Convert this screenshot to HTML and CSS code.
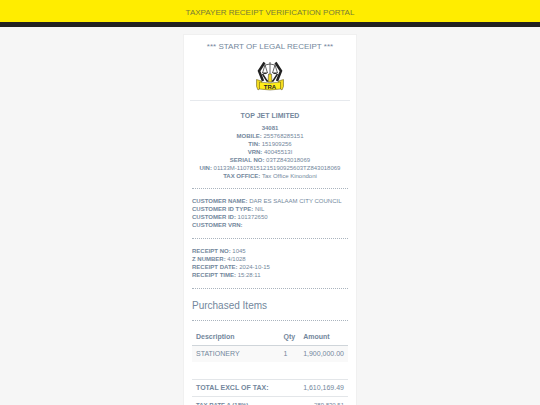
FILE: index.html
```html
<!DOCTYPE html>
<html lang="en">
<head>
  <meta charset="UTF-8" />
  <meta name="viewport" content="width=device-width,initial-scale=1.0"/>
  <title>Taxpayer Receipt Verification Portal</title>
  <link rel="stylesheet" href="styles.css">
</head>
<body>
  <header class="topbar">TAXPAYER RECEIPT VERIFICATION PORTAL</header>
  <main class="receipt">
    <div class="receipt-header">
      <p class="legal">*** START OF LEGAL RECEIPT ***</p>
      <svg class="logo" viewBox="0 0 56 60" role="img" aria-label="TRA">
        <path d="M17 3 6 20 14 40M39 3 50 20 42 40" fill="none" stroke="#222" stroke-width="5"/>
        <path d="M13 26 22 40H34L43 26" fill="none" stroke="#222" stroke-width="3"/>
        <path d="M28 2V30M18 8Q28 4 38 8M18 8 13 24M18 8 23 24M38 8 33 24M38 8 43 24" fill="none" stroke="#333" stroke-width="1.5"/>
        <path d="M12 23H24Q18 30 12 23ZM32 23H44Q38 30 32 23Z" fill="#333"/>
        <path d="M25 26H31L32 42H24Z" fill="#f4dc20" stroke="#333"/>
        <path d="M1 37 11 40V53L4 58 1 51ZM55 37 45 40V53L52 58 55 51Z" fill="#f4dc20" stroke="#554d16"/>
        <path d="M7 42Q28 46 49 42V56Q28 60 7 56Z" fill="#ffec1a" stroke="#554d16"/>
        <text class="logo-text" x="28" y="55" text-anchor="middle">TRA</text>
      </svg>
    </div>
    <section class="company">
      <h1>TOP JET LIMITED</h1>
      <p><b>34081</b></p>
      <p><b>MOBILE:</b> 255768285151</p>
      <p><b>TIN:</b> 151909256</p>
      <p><b>VRN:</b> 40045513I</p>
      <p><b>SERIAL NO:</b> 03TZ843018069</p>
      <p><b>UIN:</b> 01133M-11078151215190925603TZ843018069</p>
      <p><b>TAX OFFICE:</b> Tax Office Kinondoni</p>
    </section>
    <section class="details">
      <p><b>CUSTOMER NAME:</b> DAR ES SALAAM CITY COUNCIL</p>
      <p><b>CUSTOMER ID TYPE:</b> NIL</p>
      <p><b>CUSTOMER ID:</b> 101372650</p>
      <p><b>CUSTOMER VRN:</b></p>
    </section>
    <section class="details">
      <p><b>RECEIPT NO:</b> 1045</p>
      <p><b>Z NUMBER:</b> 4/1028</p>
      <p><b>RECEIPT DATE:</b> 2024-10-15</p>
      <p><b>RECEIPT TIME:</b> 15:28:11</p>
    </section>
    <section class="purchases">
      <h2>Purchased Items</h2>
      <table class="items">
        <thead>
          <tr><th>Description</th><th>Qty</th><th>Amount</th></tr>
        </thead>
        <tbody>
          <tr><td>STATIONERY</td><td>1</td><td>1,900,000.00</td></tr>
        </tbody>
      </table>
      <table class="totals">
        <tbody>
          <tr><th>TOTAL EXCL OF TAX:</th><td>1,610,169.49</td></tr>
          <tr class="small"><th>TAX RATE A (18%)</th><td>289,830.51</td></tr>
        </tbody>
      </table>
    </section>
  </main>
</body>
</html>
```
FILE: styles.css
```css
body {
  margin: 0;
  background: #f6f6f6;
  color: #73879c;
  font-family: "Liberation Sans", Arial, sans-serif;
  font-size: 6px;
  line-height: 8px;
}
h1, h2, p {
  margin: 0;
}
.topbar {
  padding: 8px 0 4px;
  background: #ffed00;
  border-bottom: 5px solid #222;
  color: #777c38;
  font-size: 8px;
  line-height: 10px;
  text-align: center;
}
.receipt {
  box-sizing: border-box;
  max-width: 174px;
  margin: 7px auto 0;
  padding: 7px 6px;
  background: #fff;
  border: 1px solid #f0f0f0;
}
.receipt-header {
  padding-bottom: 9px;
  border-bottom: 1px solid #e6e9ed;
  text-align: center;
}
.legal {
  font-size: 8px;
  line-height: 10px;
}
.logo {
  display: block;
  width: 28px;
  height: 30px;
  margin: 9px auto 0;
}
.logo-text {
  fill: #222;
  font-size: 12px;
  font-weight: bold;
}
.company,
.details,
.purchases {
  margin: 0 2px;
}
.company {
  padding: 10px 0 8px;
  border-bottom: 1px dotted #aab4be;
  text-align: center;
}
.company h1 {
  margin-bottom: 3px;
  font-size: 7px;
  line-height: 10px;
}
.details {
  padding: 8px 0 9px;
  border-bottom: 1px dotted #aab4be;
}
h2 {
  padding: 10px 0 8px;
  border-bottom: 1px dotted #aab4be;
  font-size: 10px;
  font-weight: normal;
  line-height: 13px;
}
table {
  width: 100%;
  border-collapse: collapse;
  font-size: 7px;
  line-height: 10px;
}
th, td {
  padding: 3px 4px;
  text-align: left;
}
.items {
  margin: 8px 0 17px;
}
.items th {
  border-bottom: 1px solid #cfd5da;
}
.items td {
  background: #f9f9f9;
}
.items th:first-child {
  width: 100%;
}
.totals tr {
  border-top: 1px solid #e3e6e9;
}
.totals td {
  text-align: right;
}
.small {
  font-size: 6px;
}
```
